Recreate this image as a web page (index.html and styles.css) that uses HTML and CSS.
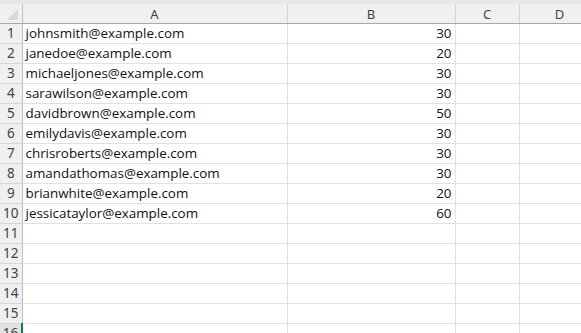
FILE: index.html
```html
<!DOCTYPE html>
<html lang="en">
<head>
    <meta charset="UTF-8">
    <meta name="viewport" content="width=device-width, initial-scale=1.0">
    <title>Sheet1</title>
    <link rel="stylesheet" href="styles.css">
</head>
<body>
    <div class="sheet">
        <table class="grid">
            <colgroup>
                <col class="col-head">
                <col class="col-a">
                <col class="col-b">
                <col class="col-c">
                <col class="col-d">
            </colgroup>
            <thead>
                <tr>
                    <th class="corner"><span class="select-all"></span></th>
                    <th>A</th>
                    <th>B</th>
                    <th>C</th>
                    <th>D</th>
                </tr>
            </thead>
            <tbody id="rows"></tbody>
        </table>
    </div>

    <script>
        const data = [
            ['johnsmith@example.com', 30],
            ['janedoe@example.com', 20],
            ['michaeljones@example.com', 30],
            ['sarawilson@example.com', 30],
            ['davidbrown@example.com', 50],
            ['emilydavis@example.com', 30],
            ['chrisroberts@example.com', 30],
            ['amandathomas@example.com', 30],
            ['brianwhite@example.com', 20],
            ['jessicataylor@example.com', 60]
        ];

        const body = document.getElementById('rows');
        for (let i = 1; i <= 16; i++) {
            const row = data[i - 1] || ['', ''];
            const tr = document.createElement('tr');
            if (i === 16) tr.className = 'active';
            tr.innerHTML = `
                <th class="row-num">${i}</th>
                <td>${row[0]}</td>
                <td class="num">${row[1]}</td>
                <td></td>
                <td></td>
            `;
            body.appendChild(tr);
        }
    </script>
</body>
</html>
```

FILE: styles.css
```css
html, body {
    margin: 0;
    padding: 0;
    height: 100%;
    overflow: hidden;
    background-color: #fff;
}
.sheet {
    padding-top: 4px;
    background-color: #e9e5e9;
}
.grid {
    border-collapse: collapse;
    table-layout: fixed;
    width: 600px;
    background-color: #fff;
    font-family: "Open Sans", sans-serif;
    font-size: 13.4px;
    color: #111;
}
.col-head { width: 22px; }
.col-a { width: 265px; }
.col-b { width: 168px; }
.col-c { width: 64px; }
.col-d { width: 81px; }
thead th {
    height: 19px;
    padding: 0;
    background-color: #f0f0f0;
    border-right: 1px solid #d6d6d6;
    border-bottom: 1px solid #a8a8a8;
    font-family: "Noto Sans", sans-serif;
    font-weight: normal;
    font-size: 13px;
    color: #444;
    text-align: center;
}
.corner {
    position: relative;
    border-right: 1px solid #bdbdbd;
}
.select-all {
    position: absolute;
    right: 4px;
    bottom: 3px;
    width: 0;
    height: 0;
    border-left: 11px solid transparent;
    border-bottom: 11px solid #d9d9d9;
}
tbody td, tbody th {
    height: 19px;
    padding: 0 3px;
    border-right: 1px solid #e1e1e1;
    border-bottom: 1px solid #e1e1e1;
    white-space: nowrap;
    overflow: hidden;
    line-height: 19px;
}
.row-num {
    padding: 0;
    background-color: #f0f0f0;
    border-right: 1px solid #bdbdbd;
    border-bottom: 1px solid #d6d6d6;
    font-family: "Noto Sans", sans-serif;
    font-weight: normal;
    font-size: 13.5px;
    color: #444;
    text-align: center;
}
.num {
    text-align: right;
}
.active .row-num {
    background-color: #e2e2e2;
    border-right: 2px solid #107c41;
}
```
